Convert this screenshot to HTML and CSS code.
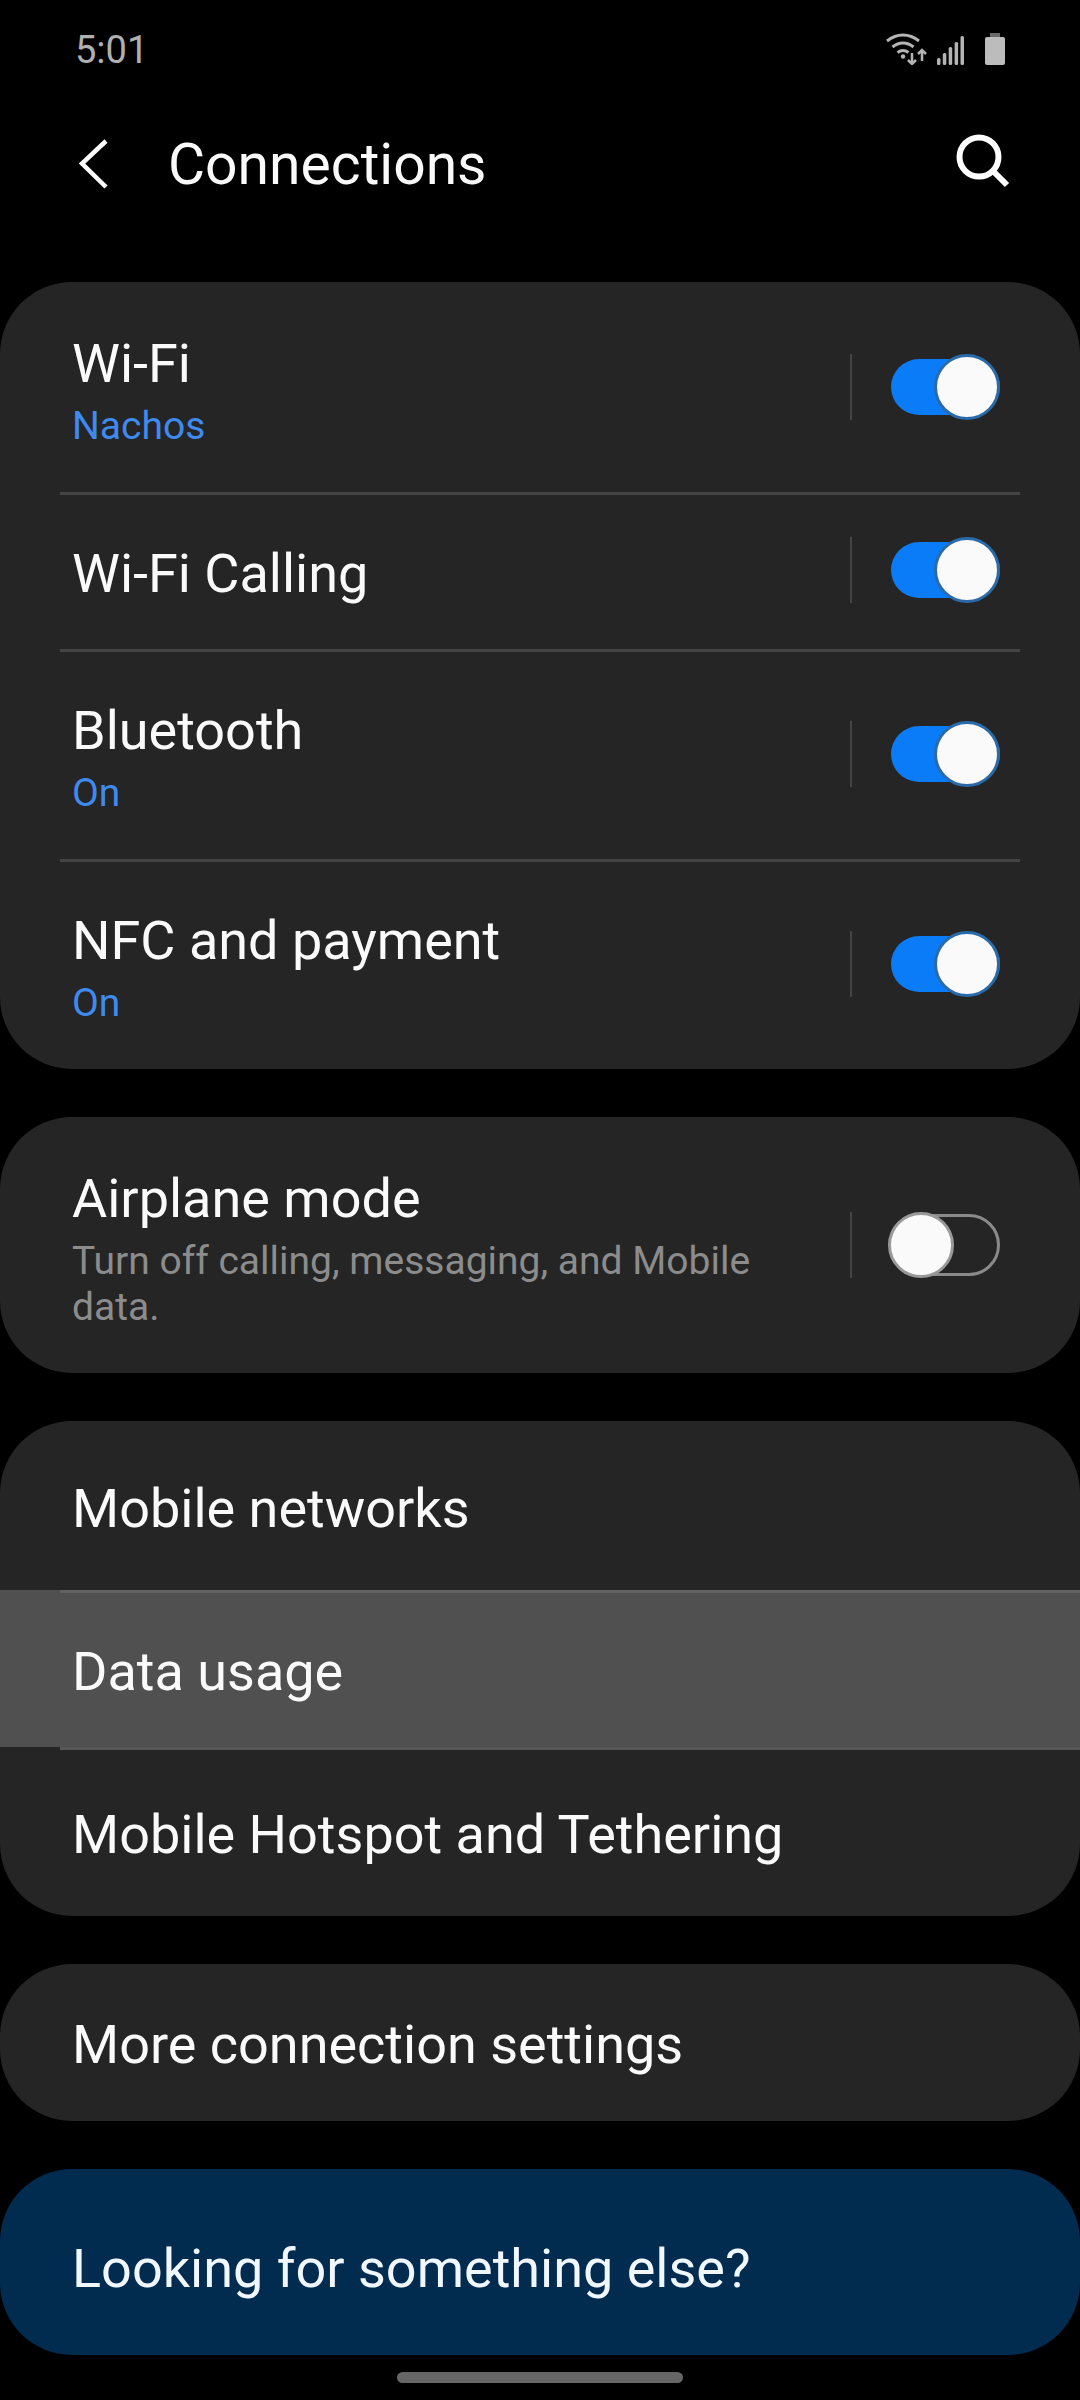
FILE: index.html
```html
<!DOCTYPE html>
<html lang="en">
<head>
    <meta charset="UTF-8">
    <meta name="viewport" content="width=device-width, initial-scale=1.0">
    <title>Connections</title>
    <link rel="stylesheet" href="styles.css">
</head>
<body>
    <!-- Status bar -->
    <div class="status-bar">
        <span class="clock">5:01</span>
        <div class="status-icons">
            <svg class="icon-wifi" width="42" height="32" viewBox="0 0 42 32" fill="none" stroke="#b4b4b4" stroke-width="3">
                <path d="M1 8C11 0 23 0 33 8"/>
                <path d="M6.500 14C13 8.500 21 8.500 27.500 14"/>
                <path d="M11.500 19.500C15 17 19 17 22.500 19.500"/>
                <circle cx="17" cy="23.500" r="2.200" fill="#b4b4b4" stroke="none"/>
                <path d="M26 20V31M22 27L26 31L30 27" stroke-width="2.500"/>
                <path d="M36 28V17M32 21L36 17L40 21" stroke-width="2.500"/>
            </svg>
            <svg class="icon-signal" width="27" height="29" viewBox="0 0 27 29" fill="#b4b4b4">
                <rect x="0" y="22" width="3.500" height="7" rx="1.500"/>
                <rect x="5.800" y="17" width="3.500" height="12" rx="1.500"/>
                <rect x="11.700" y="11" width="3.500" height="18" rx="1.500"/>
                <rect x="17.600" y="6" width="3.500" height="23" rx="1.500"/>
                <rect x="23.500" y="0" width="3.500" height="29" rx="1.500"/>
            </svg>
            <svg class="icon-battery" width="20" height="32" viewBox="0 0 20 32">
                <path d="M5 0H15V4H5Z" fill="#6a6a6a"/>
                <rect x="0" y="4" width="20" height="28" rx="2" fill="#bcbcbc"/>
            </svg>
        </div>
    </div>

    <!-- Title bar -->
    <div class="title-bar">
        <svg class="back-icon" width="32" height="50" viewBox="0 0 32 50" fill="none" stroke="#fff" stroke-width="4.500">
            <path d="M28 2L4 24.500L28 48"/>
        </svg>
        <h1>Connections</h1>
        <svg class="search-icon" width="54" height="54" viewBox="0 0 54 54" fill="none" stroke="#fff" stroke-width="6">
            <circle cx="23" cy="23" r="19.500"/>
            <path d="M37 37L51 51"/>
        </svg>
    </div>

    <div class="card">
        <div class="row row-wifi">
            <div class="row-text">
                <div class="row-title">Wi-Fi</div>
                <div class="row-sub blue">Nachos</div>
            </div>
            <div class="row-action">
                <div class="switch on"><div class="thumb"></div></div>
            </div>
        </div>
        <div class="row row-calling">
            <div class="row-text">
                <div class="row-title">Wi-Fi Calling</div>
            </div>
            <div class="row-action">
                <div class="switch on"><div class="thumb"></div></div>
            </div>
        </div>
        <div class="row row-two">
            <div class="row-text">
                <div class="row-title">Bluetooth</div>
                <div class="row-sub blue">On</div>
            </div>
            <div class="row-action">
                <div class="switch on"><div class="thumb"></div></div>
            </div>
        </div>
        <div class="row row-two last">
            <div class="row-text">
                <div class="row-title">NFC and payment</div>
                <div class="row-sub blue">On</div>
            </div>
            <div class="row-action">
                <div class="switch on"><div class="thumb"></div></div>
            </div>
        </div>
    </div>

    <div class="card">
        <div class="row row-airplane last">
            <div class="row-text">
                <div class="row-title">Airplane mode</div>
                <div class="row-sub gray">Turn off calling, messaging, and Mobile data.</div>
            </div>
            <div class="row-action">
                <div class="switch off"><div class="thumb"></div></div>
            </div>
        </div>
    </div>

    <div class="card">
        <div class="row row-link last">
            <div class="row-title">Mobile networks</div>
        </div>
        <div class="row row-link active last">
            <div class="row-title">Data usage</div>
        </div>
        <div class="row row-link last">
            <div class="row-title">Mobile Hotspot and Tethering</div>
        </div>
    </div>

    <div class="card">
        <div class="row row-more last">
            <div class="row-title">More connection settings</div>
        </div>
    </div>

    <div class="card card-blue">
        <div class="row-title">Looking for something else?</div>
    </div>

    <div class="home-bar"></div>
</body>
</html>
```

FILE: styles.css
```css
* { box-sizing: border-box; }

body {
    margin: 0;
    width: 1080px;
    height: 2400px;
    background: #000;
    color: #fafafa;
    font-family: Roboto, Arial, sans-serif;
    overflow: hidden;
}

/* Status bar */
.status-bar {
    display: flex;
    justify-content: space-between;
    align-items: center;
    height: 100px;
    padding: 0 75px;
}
.clock {
    font-size: 38px;
    color: #b0b0b0;
}
.status-icons {
    display: flex;
    align-items: flex-end;
    gap: 9px;
    margin-bottom: 3px;
}
.icon-battery { margin-left: 12px; }

/* Title bar */
.title-bar {
    display: flex;
    align-items: center;
    height: 128px;
    padding: 0 70px 0 78px;
}
.title-bar h1 {
    flex: 1;
    margin: 0 0 0 58px;
    font-size: 57px;
    font-weight: 400;
}
.search-icon { margin-bottom: 6px; }

/* Cards */
.card {
    background: #252525;
    border-radius: 72px;
    margin-top: 54px;
    overflow: hidden;
}
.card + .card { margin-top: 48px; }

.card-blue {
    display: flex;
    align-items: center;
    height: 186px;
    padding: 13px 0 0 72px;
    background: #022b50;
    color: #f0f7ff;
}

/* Rows */
.row {
    display: flex;
    align-items: center;
    position: relative;
    padding: 0 0 3px 72px;
}
.row::after {
    content: "";
    position: absolute;
    left: 60px;
    right: 60px;
    bottom: 0;
    height: 3px;
    background: #444;
}
.row.last { padding-bottom: 0; }
.row.last::after { display: none; }

.row-wifi { height: 213px; padding-top: 4px; }
.row-calling { height: 157px; }
.row-two { height: 210px; }
.row-two.last { height: 207px; }
.row-airplane { height: 256px; }
.row-link { height: 169px; padding-top: 6px; }
.row-link.active { height: 157px; }
.row-more { height: 157px; padding-top: 4px; }

.row-text {
    flex: 1;
    padding-top: 3px;
}
.row-two .row-text { padding-top: 5px; }
.row-airplane .row-text { padding-top: 7px; }
.row-title {
    font-size: 54px;
    line-height: 62px;
}
.row-sub {
    font-size: 39px;
    line-height: 46px;
    margin-top: 8px;
    width: 700px;
}
.blue { color: #3f8aee; }
.gray { color: #8c8c8c; }

/* Pressed row */
.row.active { background: #505050; }
.row.active::before {
    content: "";
    position: absolute;
    left: 60px;
    right: 0;
    top: 0;
    height: 3px;
    background: #626262;
}
.row.active::after {
    display: block;
    bottom: -3px;
    right: 0;
    background: #585858;
}

/* Switches */
.row-action {
    display: flex;
    align-items: center;
    width: 230px;
    height: 66px;
    margin-top: -4px;
    padding-left: 39px;
    border-left: 2px solid #444;
}
.row-airplane .row-action { margin-top: 0; }
.switch {
    display: flex;
    align-items: center;
    width: 109px;
    height: 56px;
    border-radius: 28px;
}
.thumb {
    flex: none;
    width: 66px;
    height: 66px;
    border-radius: 50%;
    background: #fafafa;
}
.switch.on {
    justify-content: flex-end;
    background: #0a7cf8;
}
.switch.on .thumb { border: 3px solid #2a6aa8; }
.switch.off {
    height: 62px;
    border-radius: 31px;
    border: 3px solid #8a8a8a;
}
.switch.off .thumb {
    margin-left: -6px;
    border: 3px solid #999;
}

.home-bar {
    width: 286px;
    height: 11px;
    margin: 17px auto 0;
    border-radius: 6px;
    background: #666;
}
```
